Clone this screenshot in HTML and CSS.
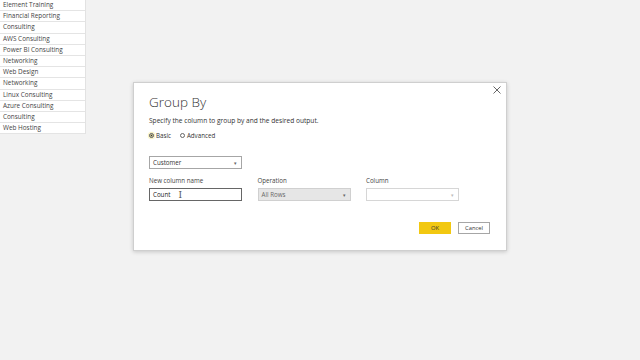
FILE: index.html
```html
<!DOCTYPE html>
<html lang="en">
  <head>
    <meta charset="UTF-8" />
    <meta name="viewport" content="width=device-width, initial-scale=1.0" />
    <title>Group By</title>
    <link rel="stylesheet" href="styles.css">
  </head>
  <body>
    <main class="background">
      <section class="table">
        <div class="row">Element Training</div>
        <div class="row">Financial Reporting</div>
        <div class="row">Consulting</div>
        <div class="row">AWS Consulting</div>
        <div class="row">Power BI Consulting</div>
        <div class="row">Networking</div>
        <div class="row">Web Design</div>
        <div class="row">Networking</div>
        <div class="row">Linux Consulting</div>
        <div class="row">Azure Consulting</div>
        <div class="row">Consulting</div>
        <div class="row">Web Hosting</div>
      </section>

      <section class="dialog">
        <button class="close">
          <svg width="8" height="8" viewBox="0 0 8 8">
            <path d="M0.5 0.5 L7.5 7.5 M7.5 0.5 L0.5 7.5" stroke="#555" stroke-width="0.9" fill="none" />
          </svg>
        </button>
        <h1 class="heading">Group By</h1>
        <p class="hint">Specify the column to group by and the desired output.</p>
        <div class="radios">
          <span class="radio"><span class="dot checked"></span>Basic</span>
          <span class="radio"><span class="dot"></span>Advanced</span>
        </div>

        <div class="select first">
          <span>Customer</span>
          <span class="caret">&#9662;</span>
        </div>

        <div class="fields">
          <div class="field">
            <label>New column name</label>
            <div class="input">Count<span class="cursor">I</span></div>
          </div>
          <div class="field">
            <label>Operation</label>
            <div class="select disabled"><span>All Rows</span><span class="caret">&#9662;</span></div>
          </div>
          <div class="field">
            <label>Column</label>
            <div class="select empty"><span></span><span class="caret">&#9662;</span></div>
          </div>
        </div>

        <div class="controls">
          <button class="btn ok">OK</button>
          <button class="btn">Cancel</button>
        </div>
      </section>
    </main>
  </body>
</html>
```

FILE: styles.css
```css
* {
  padding: 0;
  margin: 0;
  box-sizing: border-box;
  font-family: "Open Sans", "Noto Sans", sans-serif;
}

.background {
  background-color: #f2f2f2;
  width: 640px;
  height: 360px;
  position: relative;
  overflow: hidden;
}

.table {
  width: 86px;
  background: #fff;
  border-right: 1px solid #e2e2e2;
}

.row {
  height: 11.2px;
  line-height: 10px;
  font-size: 6.4px;
  color: #444;
  padding-left: 3px;
  border-bottom: 1px solid #e4e4e4;
}

.dialog {
  position: absolute;
  left: 133px;
  top: 82px;
  width: 374px;
  height: 169px;
  background: #fff;
  border: 1px solid #cfcfcf;
  box-shadow: 0 1px 4px rgba(0, 0, 0, 0.18);
  padding: 11px 15px 0 15px;
}

.close {
  position: absolute;
  right: 5px;
  top: 3px;
  border: none;
  padding: 0;
  background: none;
  width: 8px;
  height: 8px;
  display: block;
}

.close svg {
  display: block;
}

.heading {
  font-size: 13.5px;
  font-weight: 300;
  color: #333;
  line-height: 16px;
}

.hint {
  margin-top: 6px;
  font-size: 6.6px;
  color: #333;
  line-height: 9px;
}

.radios {
  margin-top: 6px;
  display: flex;
  gap: 9px;
  font-size: 6.2px;
  color: #333;
  line-height: 9px;
}

.radio {
  display: flex;
  align-items: center;
  gap: 2px;
}

.dot {
  width: 5px;
  height: 5px;
  border: 1px solid #666;
  border-radius: 50%;
  display: inline-block;
}

.dot.checked {
  background: radial-gradient(circle, #333 40%, #f2e9a6 50%);
  border-color: #555;
  box-shadow: 0 0 1px 1px #f6eeb0;
}

.select {
  width: 93px;
  height: 13px;
  border: 1px solid #a6a6a6;
  display: flex;
  justify-content: space-between;
  align-items: center;
  padding: 0 4px 0 3px;
  font-size: 6.2px;
  color: #333;
}

.select.first {
  margin-top: 16px;
}

.caret {
  font-size: 5px;
  color: #666;
}

.select.disabled {
  background: #e6e6e6;
  border-color: #d0d0d0;
  color: #666;
}

.select.empty {
  border-color: #d6d6d6;
}

.select.empty .caret {
  color: #bbb;
}

.fields {
  margin-top: 8px;
  display: flex;
  gap: 15.5px;
}

.field label {
  display: block;
  font-size: 6.2px;
  color: #444;
  line-height: 8px;
  margin-bottom: 3px;
}

.input {
  width: 93px;
  height: 13px;
  border: 1px solid #666;
  font-size: 6.2px;
  color: #222;
  display: flex;
  align-items: center;
  padding-left: 3px;
}

.cursor {
  margin-left: 8px;
  font-family: "DejaVu Serif", serif;
  font-size: 9px;
  color: #555;
}

.controls {
  margin-top: 21px;
  display: flex;
  justify-content: flex-end;
  gap: 7px;
  padding-right: 1px;
}

.btn {
  width: 32px;
  height: 12px;
  font-size: 5.8px;
  border: 1px solid #a6a6a6;
  background: #fff;
  color: #333;
}

.btn.ok {
  background: #f2c811;
  border-color: #f2c811;
}
```
